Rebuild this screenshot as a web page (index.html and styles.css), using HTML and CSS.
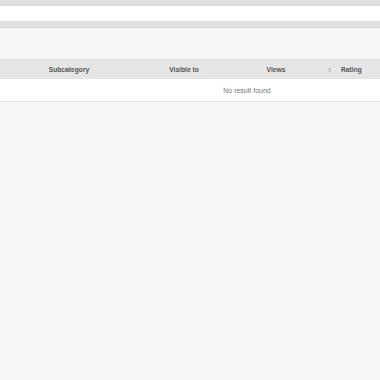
FILE: index.html
```html
<!DOCTYPE html>
<html>
<head>
<meta charset="utf-8">
<link rel="stylesheet" href="styles.css">
</head>
<body>
<div class="topbar"></div>
<div class="whitebar"></div>
<div class="graybar"></div>
<div class="spacer"></div>
<table class="grid">
  <colgroup>
    <col class="c1">
    <col class="c2">
    <col class="c3">
    <col class="c4">
  </colgroup>
  <thead>
    <tr>
      <th>Subcategory</th>
      <th>Visible to</th>
      <th class="views">Views<span class="sort">&#8661;</span></th>
      <th class="rating">Rating</th>
    </tr>
  </thead>
  <tbody>
    <tr>
      <td colspan="4" class="empty">No result found</td>
    </tr>
  </tbody>
</table>
</body>
</html>
```
FILE: styles.css
```css
html, body {
  margin: 0;
  padding: 0;
  background: #f7f7f7;
  font-family: "Liberation Sans", Arial, sans-serif;
  overflow: hidden;
}
.topbar {
  height: 5px;
  background: #e0e0e0;
  border-bottom: 1px solid #d8d8d8;
}
.whitebar {
  height: 15px;
  background: #fff;
}
.graybar {
  height: 6px;
  background: #e0e0e0;
  border-bottom: 1px solid #d6d6d6;
}
.spacer {
  height: 31px;
}
.grid {
  width: 380px;
  border-collapse: collapse;
  table-layout: fixed;
  border-bottom: 1px solid #e6e6e6;
}
.c1 { width: 138px; }
.c2 { width: 92px; }
.c3 { width: 106px; }
.c4 { width: 44px; }
.grid th {
  background: #e5e5e5;
  color: #555;
  font-size: 6.7px;
  font-weight: bold;
  height: 20px;
  padding: 0;
  text-align: center;
}
.views {
  position: relative;
  padding-right: 14px !important;
}
.rating {
  text-align: left !important;
  padding-left: 5px !important;
}
.sort {
  position: absolute;
  right: 4px;
  top: 7px;
  color: #aaa;
  font-weight: normal;
  font-size: 6px;
}
.grid td {
  background: #fff;
  height: 22px;
  padding: 0;
}
.empty {
  text-align: center;
  color: #777;
  font-size: 7px;
  padding-left: 114px !important;
}
```
